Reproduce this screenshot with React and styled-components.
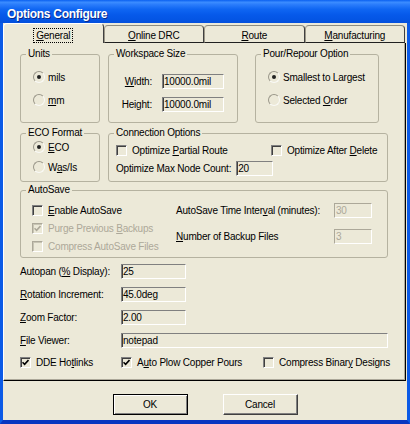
import React from 'react';
import styled, { createGlobalStyle } from 'styled-components';

const FONT = `"Liberation Sans", Arial, sans-serif`;
const BG = '#ECE9D8';

const Global = createGlobalStyle`
  html, body { margin: 0; padding: 0; background: ${BG}; }
  body { font-family: ${FONT}; font-size: 10px; letter-spacing: -0.2px; color: #000; }
  * { box-sizing: border-box; }
`;

const Window = styled.div`
  width: 410px;
  height: 424px;
  display: flex;
  flex-direction: column;
  overflow: hidden;
`;

const TitleBar = styled.div`
  height: 23px;
  flex: none;
  display: flex;
  align-items: center;
  padding: 4px 0 0 7px;
  color: #fff;
  font-family: ${FONT};
  font-weight: bold;
  font-size: 12px;
  letter-spacing: -0.3px;
  text-shadow: 1px 1px 0 #0a2a8c;
  background: linear-gradient(to bottom, #0a60f0 0%, #3b8cff 10%, #2a7cfb 20%, #0f66f2 40%, #0659ea 65%, #0455e4 85%, #0450dc 100%);
`;

const Frame = styled.div`
  flex: 1;
  display: flex;
  flex-direction: column;
  background: ${BG};
  border-left: 3px solid #0b5ae6;
  border-right: 3px solid #0b5ae6;
  border-bottom: 4px solid #0835c0;
`;

const TabStrip = styled.div`
  display: grid;
  grid-template-columns: repeat(4, 1fr);
  align-items: end;
  width: 402px;
  height: 20px;
  flex: none;
`;

const Tab = styled.div`
  height: ${p => (p.$active ? 20 : 18)}px;
  display: flex;
  justify-content: center;
  align-items: flex-start;
  padding-top: ${p => (p.$active ? 4 : 3)}px;
  border-style: solid;
  border-width: 1px 1px ${p => (p.$active ? 0 : 1)}px 1px;
  border-color: ${p => (p.$active ? '#fff #404040 transparent #fff' : '#8c8c80 #404040 #202020 #9c9888')};
  border-radius: 4px 4px 0 0;
  background: ${BG};
`;

const TabLabel = styled.span`
  display: inline-block;
  line-height: 13px;
  padding: 0 2px;
  border: ${p => (p.$focus ? '1px dotted #000' : 'none')};
`;

const Panel = styled.div`
  width: 403px;
  height: 338px;
  flex: none;
  border-left: 1px solid #fff;
  border-right: 1px solid #000;
  border-bottom: 1px solid #000;
  box-shadow: inset -1px -1px 0 #aca899;
  padding: 5px 17px 0 16px;
  display: flex;
  flex-direction: column;
`;

const Row = styled.div`
  display: grid;
  grid-template-columns: ${p => p.$cols};
  column-gap: 8px;
  align-items: stretch;
  margin-top: ${p => p.$mt || 0}px;
`;

const Group = styled.fieldset`
  margin: 0 0 0 ${p => p.$ml || 0}px;
  padding: 0;
  min-width: 0;
  border: 1px solid #b5b2a0;
  border-radius: 3px;
`;

const Legend = styled.legend`
  padding: 0 2px;
  margin-left: 5px;
  line-height: 12px;
  font-size: 10px;
`;

const Stack = styled.div`
  display: flex;
  flex-direction: column;
  gap: ${p => p.$gap || 0}px;
  padding: ${p => p.$pad || '0'};
`;

const Item = styled.label`
  display: flex;
  align-items: center;
  gap: ${p => p.$gap ?? 5}px;
  height: 16px;
  white-space: nowrap;
  color: ${p => (p.$disabled ? '#aca899' : '#000')};
`;

const Radio = styled.span`
  width: 12px;
  height: 12px;
  flex: none;
  border-radius: 50%;
  border: 1px solid;
  border-color: #9a978a #fafaf6 #fafaf6 #9a978a;
  display: flex;
  align-items: center;
  justify-content: center;
  &::after {
    content: '';
    width: 4px;
    height: 4px;
    border-radius: 50%;
    background: ${p => (p.$checked ? '#222' : 'transparent')};
  }
`;

const Box = styled.span`
  width: 11px;
  height: 11px;
  flex: none;
  border: 1px solid;
  border-color: ${p => (p.$disabled ? '#aca899 #fff #fff #aca899' : '#808080 #fff #fff #808080')};
  box-shadow: inset 1px 1px 0 ${p => (p.$disabled ? '#c8c5b4' : '#404040')};
  display: flex;
  align-items: center;
  justify-content: center;
`;

const U = styled.span`
  text-decoration: underline;
  text-underline-offset: 1px;
`;

const Input = styled.input`
  width: ${p => p.$w}px;
  height: 15px;
  flex: none;
  margin: 0;
  padding: 0 1px;
  font-family: ${FONT};
  font-size: 10px;
  letter-spacing: -0.2px;
  color: ${p => (p.disabled ? '#aca899' : '#000')};
  background: transparent;
  border: 1px solid;
  border-color: ${p => (p.disabled ? '#aca899 #fff #fff #aca899' : '#808080 #fff #fff #808080')};
  box-shadow: ${p => (p.disabled ? 'none' : 'inset 1px 0 0 #404040')};
  outline: none;
`;

const FormLine = styled.div`
  display: grid;
  grid-template-columns: ${p => p.$cols};
  column-gap: ${p => p.$gap || 0}px;
  align-items: center;
  height: 15px;
  white-space: nowrap;
`;

const RightLabel = styled.span`
  text-align: right;
`;

const Grid2 = styled.div`
  display: grid;
  grid-template-columns: ${p => p.$cols};
  margin-top: ${p => p.$mt || 0}px;
`;

const BottomButtons = styled.div`
  display: flex;
  justify-content: center;
  gap: 35px;
  padding-top: 13px;
`;

const Button = styled.button`
  width: 75px;
  height: 21px;
  margin: 0;
  padding: 0;
  font-family: ${FONT};
  font-size: 10px;
  letter-spacing: -0.2px;
  color: #000;
  background: ${BG};
  border: 1px solid;
  border-color: ${p => (p.$default ? '#000' : '#fff #404040 #404040 #fff')};
  box-shadow: ${p =>
    p.$default ? 'inset 1px 1px 0 #fff, inset -1px -1px 0 #808080' : 'inset -1px -1px 0 #808080'};
`;

const Check = ({ checked, disabled }) => (
  <Box $disabled={disabled}>
    {checked && (
      <svg width="7" height="7" viewBox="0 0 7 7">
        <path d="M0.5 3.2 L2.6 5.3 L6.5 1" fill="none" stroke={disabled ? '#aca899' : '#000'} strokeWidth="1.6" />
      </svg>
    )}
  </Box>
);

const CheckItem = ({ checked, disabled, children }) => (
  <Item $disabled={disabled}>
    <Check checked={checked} disabled={disabled} />
    <span>{children}</span>
  </Item>
);

const RadioItem = ({ checked, children }) => (
  <Item $gap={3}>
    <Radio $checked={checked} />
    <span>{children}</span>
  </Item>
);

export default function App() {
  return (
    <>
      <Global />
      <Window>
        <TitleBar>Options Configure</TitleBar>
        <Frame>
          <TabStrip>
            <Tab $active>
              <TabLabel $focus><U>G</U>eneral</TabLabel>
            </Tab>
            <Tab>
              <TabLabel><U>O</U>nline DRC</TabLabel>
            </Tab>
            <Tab>
              <TabLabel><U>R</U>oute</TabLabel>
            </Tab>
            <Tab>
              <TabLabel><U>M</U>anufacturing</TabLabel>
            </Tab>
          </TabStrip>
          <Panel>
            <Row $cols="80px 130px 133px">
              <Group>
                <Legend>Units</Legend>
                <Stack $gap={7} $pad="9px 0 0 12px">
                  <RadioItem checked>mils</RadioItem>
                  <RadioItem><U>m</U>m</RadioItem>
                </Stack>
              </Group>
              <Group>
                <Legend>Workspace Size</Legend>
                <Stack $gap={8} $pad="14px 0 10px 7px">
                  <FormLine $cols="36px 62px" $gap={10}>
                    <RightLabel><U>W</U>idth:</RightLabel>
                    <Input readOnly $w={62} value="10000.0mil" />
                  </FormLine>
                  <FormLine $cols="36px 62px" $gap={10}>
                    <RightLabel>Height:</RightLabel>
                    <Input readOnly $w={62} value="10000.0mil" />
                  </FormLine>
                </Stack>
              </Group>
              <Group $ml={9}>
                <Legend>Pour/Repour Option</Legend>
                <Stack $gap={7} $pad="9px 0 0 12px">
                  <RadioItem checked>Smallest to Largest</RadioItem>
                  <RadioItem>Selected <U>O</U>rder</RadioItem>
                </Stack>
              </Group>
            </Row>

            <Row $cols="80px 280px" $mt={4}>
              <Group>
                <Legend>ECO Format</Legend>
                <Stack $gap={4} $pad="0 0 0 12px">
                  <RadioItem checked><U>E</U>CO</RadioItem>
                  <RadioItem>W<U>a</U>s/Is</RadioItem>
                </Stack>
              </Group>
              <Group>
                <Legend>Connection Options</Legend>
                <Stack $gap={2} $pad="3px 0 5px 7px">
                  <Grid2 $cols="155px 1fr">
                    <CheckItem>Optimize <U>P</U>artial Route</CheckItem>
                    <CheckItem>Optimize After <U>D</U>elete</CheckItem>
                  </Grid2>
                  <Item $gap={5}>
                    <span>Optimize Max Node Count:</span>
                    <Input readOnly $w={37} value="20" />
                  </Item>
                </Stack>
              </Group>
            </Row>

            <Row $cols="1fr" $mt={2}>
              <Group>
                <Legend>AutoSave</Legend>
                <Grid2 $cols="155px 1fr">
                  <Stack $gap={2} $pad="6px 0 3px 11px">
                    <CheckItem><U>E</U>nable AutoSave</CheckItem>
                    <CheckItem checked disabled>Purge Previous <U>B</U>ackups</CheckItem>
                    <CheckItem disabled>Compress AutoSave Files</CheckItem>
                  </Stack>
                  <Stack $gap={11} $pad="7px 0 0 0">
                    <FormLine $cols="158px 38px">
                      <span>AutoSave Time Inter<U>v</U>al (minutes):</span>
                      <Input readOnly disabled $w={38} value="30" />
                    </FormLine>
                    <FormLine $cols="158px 38px">
                      <span><U>N</U>umber of Backup Files</span>
                      <Input readOnly disabled $w={38} value="3" />
                    </FormLine>
                  </Stack>
                </Grid2>
              </Group>
            </Row>

            <Stack $gap={8} $pad="6px 0 0 0">
              <FormLine $cols="101px 65px">
                <span>Autopan (<U>%</U> Display):</span>
                <Input readOnly $w={65} value="25" />
              </FormLine>
              <FormLine $cols="101px 65px">
                <span><U>R</U>otation Increment:</span>
                <Input readOnly $w={65} value="45.0deg" />
              </FormLine>
              <FormLine $cols="101px 65px">
                <span><U>Z</U>oom Factor:</span>
                <Input readOnly $w={65} value="2.00" />
              </FormLine>
              <FormLine $cols="101px 267px">
                <span><U>F</U>ile Viewer:</span>
                <Input readOnly $w={267} value="notepad" />
              </FormLine>
            </Stack>

            <Grid2 $cols="101px 142px 1fr" $mt={6}>
              <CheckItem checked>DDE Ho<U>t</U>links</CheckItem>
              <CheckItem checked>A<U>u</U>to Plow Copper Pours</CheckItem>
              <CheckItem>Compress Binar<U>y</U> Designs</CheckItem>
            </Grid2>
          </Panel>
          <BottomButtons>
            <Button $default>OK</Button>
            <Button>Cancel</Button>
          </BottomButtons>
        </Frame>
      </Window>
    </>
  );
}
